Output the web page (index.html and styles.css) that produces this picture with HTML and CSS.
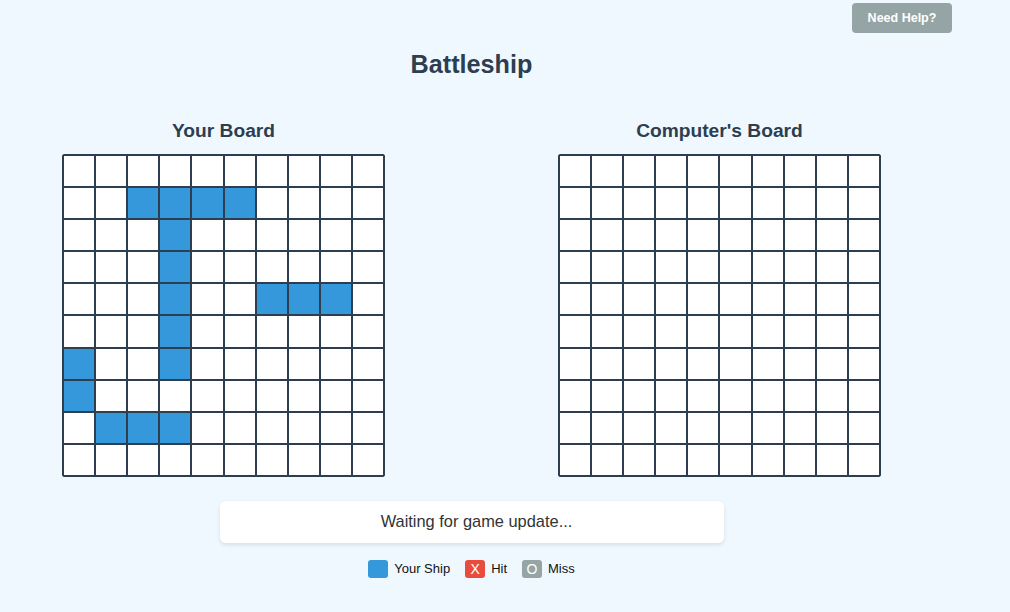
FILE: index.html
```html
<!DOCTYPE html>
<html lang="en">
<head>
<meta charset="utf-8">
<title>Battleship</title>
<link rel="stylesheet" href="styles.css">
</head>
<body>
<div class="topbar"><button class="help-btn">Need Help?</button></div>
<main class="page">
  <h1 class="title">Battleship</h1>
  <div class="boards">
    <section class="board-section">
      <h2 class="board-title">Your Board</h2>
      <div class="grid">
        <div class="cell"></div><div class="cell"></div><div class="cell"></div><div class="cell"></div><div class="cell"></div><div class="cell"></div><div class="cell"></div><div class="cell"></div><div class="cell"></div><div class="cell"></div>
        <div class="cell"></div><div class="cell"></div><div class="cell ship"></div><div class="cell ship"></div><div class="cell ship"></div><div class="cell ship"></div><div class="cell"></div><div class="cell"></div><div class="cell"></div><div class="cell"></div>
        <div class="cell"></div><div class="cell"></div><div class="cell"></div><div class="cell ship"></div><div class="cell"></div><div class="cell"></div><div class="cell"></div><div class="cell"></div><div class="cell"></div><div class="cell"></div>
        <div class="cell"></div><div class="cell"></div><div class="cell"></div><div class="cell ship"></div><div class="cell"></div><div class="cell"></div><div class="cell"></div><div class="cell"></div><div class="cell"></div><div class="cell"></div>
        <div class="cell"></div><div class="cell"></div><div class="cell"></div><div class="cell ship"></div><div class="cell"></div><div class="cell"></div><div class="cell ship"></div><div class="cell ship"></div><div class="cell ship"></div><div class="cell"></div>
        <div class="cell"></div><div class="cell"></div><div class="cell"></div><div class="cell ship"></div><div class="cell"></div><div class="cell"></div><div class="cell"></div><div class="cell"></div><div class="cell"></div><div class="cell"></div>
        <div class="cell ship"></div><div class="cell"></div><div class="cell"></div><div class="cell ship"></div><div class="cell"></div><div class="cell"></div><div class="cell"></div><div class="cell"></div><div class="cell"></div><div class="cell"></div>
        <div class="cell ship"></div><div class="cell"></div><div class="cell"></div><div class="cell"></div><div class="cell"></div><div class="cell"></div><div class="cell"></div><div class="cell"></div><div class="cell"></div><div class="cell"></div>
        <div class="cell"></div><div class="cell ship"></div><div class="cell ship"></div><div class="cell ship"></div><div class="cell"></div><div class="cell"></div><div class="cell"></div><div class="cell"></div><div class="cell"></div><div class="cell"></div>
        <div class="cell"></div><div class="cell"></div><div class="cell"></div><div class="cell"></div><div class="cell"></div><div class="cell"></div><div class="cell"></div><div class="cell"></div><div class="cell"></div><div class="cell"></div>
      </div>
    </section>
    <section class="board-section">
      <h2 class="board-title">Computer's Board</h2>
      <div class="grid">
        <div class="cell"></div><div class="cell"></div><div class="cell"></div><div class="cell"></div><div class="cell"></div><div class="cell"></div><div class="cell"></div><div class="cell"></div><div class="cell"></div><div class="cell"></div>
        <div class="cell"></div><div class="cell"></div><div class="cell"></div><div class="cell"></div><div class="cell"></div><div class="cell"></div><div class="cell"></div><div class="cell"></div><div class="cell"></div><div class="cell"></div>
        <div class="cell"></div><div class="cell"></div><div class="cell"></div><div class="cell"></div><div class="cell"></div><div class="cell"></div><div class="cell"></div><div class="cell"></div><div class="cell"></div><div class="cell"></div>
        <div class="cell"></div><div class="cell"></div><div class="cell"></div><div class="cell"></div><div class="cell"></div><div class="cell"></div><div class="cell"></div><div class="cell"></div><div class="cell"></div><div class="cell"></div>
        <div class="cell"></div><div class="cell"></div><div class="cell"></div><div class="cell"></div><div class="cell"></div><div class="cell"></div><div class="cell"></div><div class="cell"></div><div class="cell"></div><div class="cell"></div>
        <div class="cell"></div><div class="cell"></div><div class="cell"></div><div class="cell"></div><div class="cell"></div><div class="cell"></div><div class="cell"></div><div class="cell"></div><div class="cell"></div><div class="cell"></div>
        <div class="cell"></div><div class="cell"></div><div class="cell"></div><div class="cell"></div><div class="cell"></div><div class="cell"></div><div class="cell"></div><div class="cell"></div><div class="cell"></div><div class="cell"></div>
        <div class="cell"></div><div class="cell"></div><div class="cell"></div><div class="cell"></div><div class="cell"></div><div class="cell"></div><div class="cell"></div><div class="cell"></div><div class="cell"></div><div class="cell"></div>
        <div class="cell"></div><div class="cell"></div><div class="cell"></div><div class="cell"></div><div class="cell"></div><div class="cell"></div><div class="cell"></div><div class="cell"></div><div class="cell"></div><div class="cell"></div>
        <div class="cell"></div><div class="cell"></div><div class="cell"></div><div class="cell"></div><div class="cell"></div><div class="cell"></div><div class="cell"></div><div class="cell"></div><div class="cell"></div><div class="cell"></div>
      </div>
    </section>
  </div>
  <div class="status">Waiting for game update...</div>
  <div class="legend">
    <div class="legend-item"><span class="swatch swatch-ship"></span><span>Your Ship</span></div>
    <div class="legend-item"><span class="swatch swatch-hit">X</span><span>Hit</span></div>
    <div class="legend-item"><span class="swatch swatch-miss">O</span><span>Miss</span></div>
  </div>
</main>
</body>
</html>
```

FILE: styles.css
```css
* { box-sizing: content-box; }

body {
  margin: 0;
  background: #f0f8ff;
  font-family: "Liberation Sans", Arial, sans-serif;
  color: #2c3e50;
}

.topbar {
  display: flex;
  justify-content: flex-end;
  padding: 3px 58px 0 0;
}

.help-btn {
  width: 100px;
  height: 30px;
  padding: 0;
  border: none;
  border-radius: 4px;
  background: #95a5a6;
  color: #fff;
  font-family: "Liberation Sans", Arial, sans-serif;
  font-size: 12.5px;
  font-weight: bold;
}

.page {
  width: 943px;
  display: flex;
  flex-direction: column;
  align-items: center;
}

.title {
  margin: 16px 0 0;
  font-size: 25.2px;
  line-height: 30px;
  font-weight: bold;
  color: #2c3e50;
}

.boards {
  display: flex;
  gap: 173px;
  margin-top: 41px;
}

.board-section {
  display: flex;
  flex-direction: column;
  align-items: center;
}

.board-title {
  margin: 0 0 12px;
  font-size: 19.2px;
  line-height: 22px;
  font-weight: bold;
  color: #2c3e50;
}

.grid {
  display: grid;
  grid-template-columns: repeat(10, 32.1px);
  grid-auto-rows: 32.1px;
  border: 1px solid #2c3e50;
  border-radius: 2px;
  background: #fff;
}

.cell {
  border: 1px solid #2c3e50;
  background: #fff;
}

.cell.ship { background: #3498db; }

.status {
  width: 494px;
  height: 42px;
  margin-top: 24px;
  padding-left: 10px;
  display: flex;
  align-items: center;
  justify-content: center;
  background: #fff;
  border-radius: 6px;
  box-shadow: 0 2px 4px rgba(0, 0, 0, 0.1);
  font-size: 16.4px;
  color: #333;
}

.legend {
  display: flex;
  gap: 15px;
  margin-top: 17px;
  font-size: 13px;
  color: #111;
}

.legend-item {
  display: flex;
  align-items: center;
  gap: 6px;
}

.swatch {
  width: 20px;
  height: 18px;
  border-radius: 3px;
  display: flex;
  align-items: center;
  justify-content: center;
  color: #fff;
  font-size: 14px;
}

.swatch-ship { background: #3498db; }
.swatch-hit { background: #e74c3c; }
.swatch-miss { background: #95a5a6; }
```
